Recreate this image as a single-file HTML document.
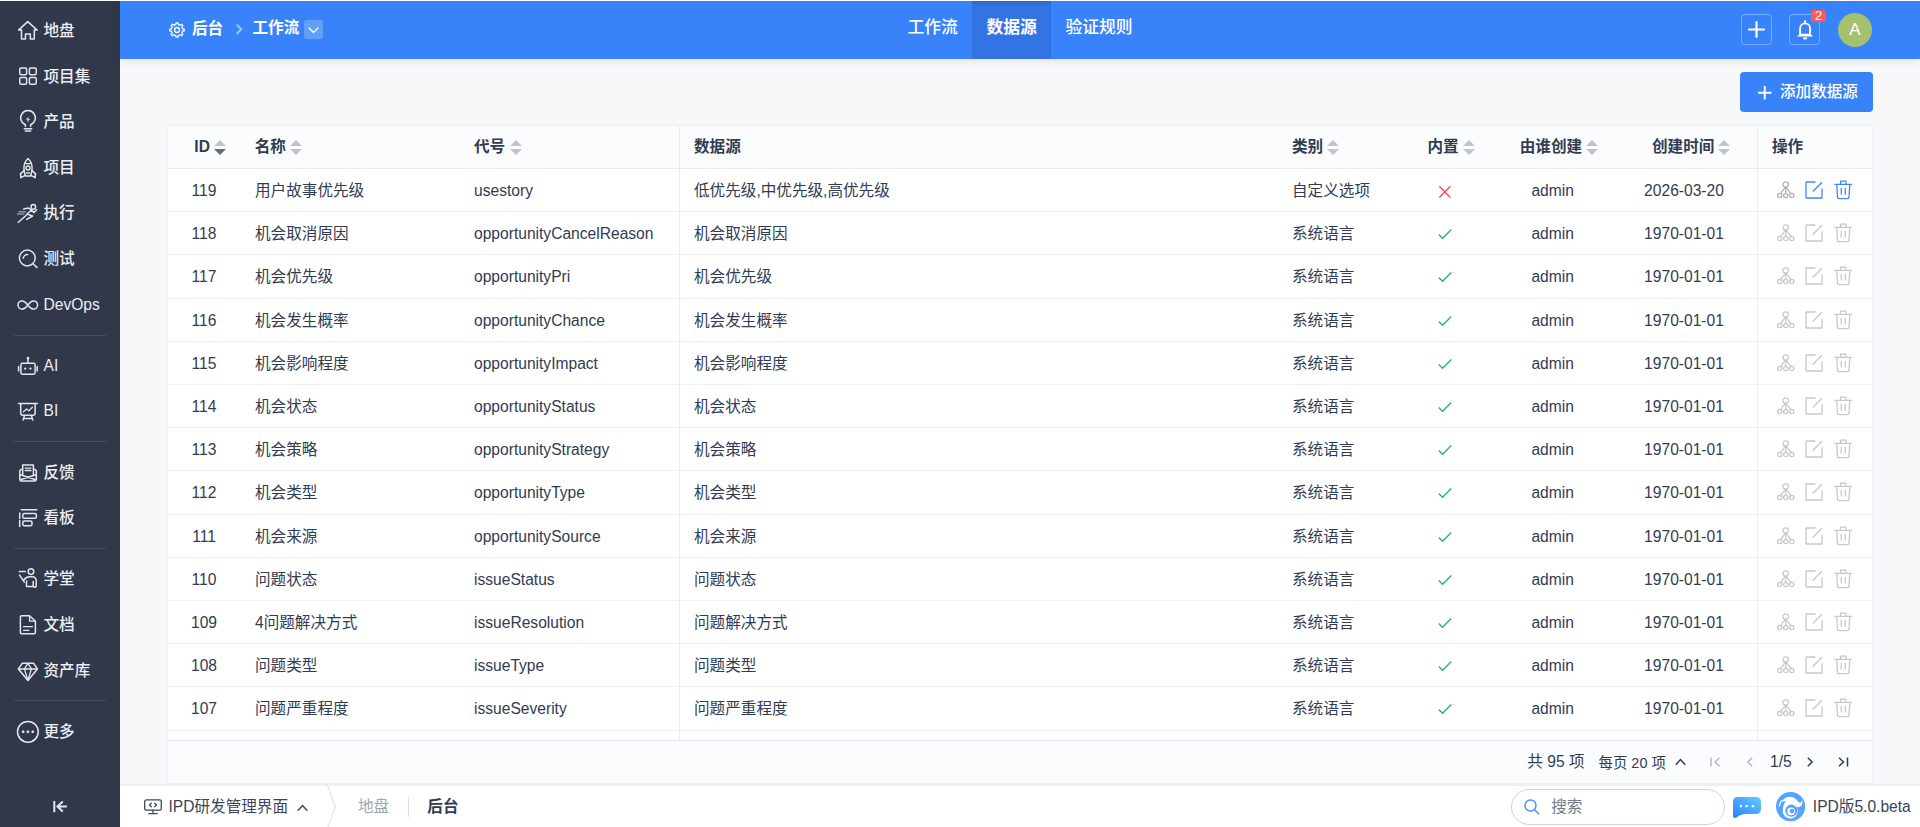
<!DOCTYPE html>
<html lang="zh-CN">
<head>
<meta charset="utf-8">
<title>数据源 - 工作流 - 后台</title>
<style>
*{box-sizing:border-box;margin:0;padding:0}
html,body{width:1920px;height:827px;overflow:hidden}
body{position:relative;background:#f7f8fa;color:#313c52;font-family:"Liberation Sans","Noto Sans CJK SC",sans-serif;font-size:15.6px;line-height:1}
.abs{position:absolute}
svg{display:block;overflow:visible}
/* top hairline */
#topline{left:0;top:0;width:1920px;height:1px;background:#fdfdfe;z-index:9}
/* sidebar */
#side{left:0;top:0;width:120px;height:827px;background:#30384a;color:#e9ecf2}
#side .it{position:absolute;left:0;width:120px;height:28px}
#side .it svg{position:absolute;left:14px;top:0;width:28px;height:28px;stroke:#e3e6ec;fill:none;stroke-width:1.5;stroke-linecap:round;stroke-linejoin:round}
#side .it span{font-weight:500;position:absolute;left:43.500px;top:0;line-height:29.500px;font-size:15.6px;white-space:nowrap;color:#eceef3}
#side .hr{position:absolute;left:14px;width:92px;height:1px;background:#454d5f}
/* header */
#head{left:120px;top:1px;width:1800px;height:57.5px;background:#3883fa;color:#fff;box-shadow:0 2px 9px rgba(40,60,100,.11)}
#head .t{position:absolute;white-space:nowrap;color:#fff;font-size:15.6px;line-height:20px}
#head .b{font-weight:700}
/* table */
#tbl{left:168px;top:126px;width:1704px;height:657px;background:#fff;border-radius:3px;box-shadow:0 0 0 1px #eef0f5,0 1px 3px rgba(60,70,100,.08);overflow:hidden}
#thead{left:0;top:0;width:1704px;height:42.6px;background:#fbfcfd;border-bottom:1px solid #e9ebf0}
#thead .h{position:absolute;top:0;line-height:42px;font-weight:700;white-space:nowrap;color:#313c52}
.so{position:absolute;top:14px;width:12px;height:15px}
.so:before,.so:after{content:"";position:absolute;left:0;border-left:6px solid transparent;border-right:6px solid transparent}
.so:before{top:0;border-bottom:6px solid #c0c4cd}
.so:after{top:9px;border-top:6px solid #c0c4cd}
.so.dn:after{border-top-color:#646b7d}
#tbody{left:0;top:43px;width:1704px;height:571px;overflow:hidden}
.r{position:absolute;left:0;width:1704px;height:43.2px;border-bottom:1px solid #eceef2}
.r span{position:absolute;top:0;line-height:43px;white-space:nowrap;color:#313c52}
.r .c0{left:0;width:72px;text-align:center}
.r .c1{left:87px}
.r .c2{left:306px}
.r .c3{left:526px}
.r .c4{left:1124px}
.r .c6{left:1334.700px;width:100px;text-align:center}
.r .c7{left:1466px;width:100px;text-align:center}
.vl{position:absolute;top:0;width:1px;height:614px;background:#ebedf2}
#tfoot{left:0;top:614px;width:1704px;height:43px;background:#fbfcfd;border-top:1px solid #dfe2e8}

.r svg{position:absolute;fill:none;stroke-linecap:round;stroke-linejoin:round}
.r .ck{left:1270px;top:15.500px;width:14px;height:12px;stroke:#27b574;stroke-width:1.400;stroke-linecap:butt;stroke-linejoin:miter}
.r .cx{left:1271.300px;top:16.600px;width:11.700px;height:11.700px;stroke:#fb4b55;stroke-width:1.500}
.r .i1{left:1608.700px;top:12.300px;width:17.500px;height:17.500px;stroke:#c8c8ca;stroke-width:1.300}
.r .i2{left:1637px;top:11.900px;width:18px;height:18px;stroke:#c8c8ca;stroke-width:1.300}
.r .i3{left:1665.800px;top:11px;width:18.500px;height:19.500px;stroke:#c8c8ca;stroke-width:1.300}
.r.a0 .i2,.r.a0 .i3{stroke:#3d86fb}
.r.a0 .i1{stroke:#b2b2b4}
.pg{fill:none;stroke-width:1.500;stroke-linecap:butt;stroke-linejoin:miter}
/* bottom bar */
#bar{left:120px;top:785px;width:1800px;height:42px;background:#fff;box-shadow:0 -1px 0 #f1f2f5}
#bar:before{content:"";position:absolute;left:0;top:0;width:100%;height:1px;background:#eceef2}
#barin{left:0;top:-.5px;width:1800px;height:42px}
</style>
</head>
<body>
<div id="side" class="abs">
<div class="it" style="top:16px"><svg viewBox="14 16 28 28"><path d="M27.700 21.600 18.600 30.100h2.900v9h4v-5h4.800v5h4v-9h2.900z"/></svg><span>地盘</span></div>
<div class="it" style="top:61.6px"><svg viewBox="14 61.6 28 28"><rect x="19.800" y="67.500" width="6.800" height="6.800" rx="1.300"/><rect x="29.400" y="67.500" width="6.800" height="6.800" rx="1.300"/><rect x="19.800" y="77.100" width="6.800" height="6.800" rx="1.300"/><rect x="29.400" y="77.100" width="6.800" height="6.800" rx="1.300"/></svg><span>项目集</span></div>
<div class="it" style="top:107.2px"><svg viewBox="14 107.2 28 28"><path d="M25.400 126.800v-1.900a7.300 7.300 0 1 1 5.200 0v1.900M24.300 128.900h7.400M25.300 131.300h5.400"/><path d="M29 116.600l-3.400 3.200h2.300l-1.100 2.800 3.500-3.400h-2.300z" fill="#e3e6ec" stroke="none"/></svg><span>产品</span></div>
<div class="it" style="top:152.8px"><svg viewBox="14 152.8 28 28"><path d="M28 158.300c-3.400 3-4.400 7.600-4 11.400.200 2.200.800 4.200 1.500 6h5c.700-1.800 1.300-3.800 1.500-6 .400-3.800-.600-8.400-4-11.400z"/><path d="M25 162.900c2 .900 4 .900 6 0"/><circle cx="28" cy="167.700" r="2"/><path d="M24 170.300l-3.500 3.400.400 3.800 4.300-2.300M32 170.300l3.500 3.400-.400 3.800-4.300-2.300M26.600 172.800h2.800"/></svg><span>项目</span></div>
<div class="it" style="top:198.4px"><svg viewBox="14 198.4 28 28"><circle cx="33.300" cy="207.300" r="2.300"/><path d="M23.700 209.400l4.700-1 3 2.100 2.600 2.500 2.700-2.800M31.200 210.600l-4.200 3.800 5.500 2-5.800 3.400M26.300 215.700l-8 7"/><path d="M19 212.100h6.500M17.500 214.400h6.500" stroke="#8c93a3"/></svg><span>执行</span></div>
<div class="it" style="top:244px"><svg viewBox="14 244 28 28"><circle cx="27.300" cy="258" r="7.900"/><path d="M32.900 263.700l4 3.700M23.300 258.300a4.300 4.300 0 0 1 4.400-3.900"/></svg><span>测试</span></div>
<div class="it" style="top:289.6px"><svg viewBox="14 289.6 28 28"><path d="M27.800 304.600c-1.700-2.300-3.400-4.100-5.700-4.100a4.100 4.100 0 0 0 0 8.200c2.300 0 4-1.800 5.700-4.100s3.400-4.100 5.700-4.100a4.100 4.100 0 0 1 0 8.200c-2.300 0-4-1.800-5.700-4.100z"/></svg><span>DevOps</span></div>
<div class="it" style="top:350.8px"><svg viewBox="14 350.8 28 28"><rect x="20.900" y="363" width="14.200" height="11" rx="1.600"/><path d="M28 358.300v4.400M18.600 366.200v4.600M37.200 366.200v4.600"/><circle cx="28" cy="357.900" r=".7" fill="#e3e6ec"/><circle cx="25.200" cy="368.400" r="1.150" fill="#e3e6ec" stroke="none"/><circle cx="30.400" cy="368.400" r="1.150" fill="#e3e6ec" stroke="none"/></svg><span>AI</span></div>
<div class="it" style="top:396.4px"><svg viewBox="14 396.4 28 28"><path d="M18.600 403.800h18.800M20.700 404v9.700a2 2 0 0 0 2 2h10.400a2 2 0 0 0 2-2V404M24.400 416l-1.300 4.500M31.500 416l1.300 4.500M23.700 419h8.500"/><path d="M23.400 412.200l3.300-2.900 2.100 2 3.600-3.700" stroke-width="1.300"/></svg><span>BI</span></div>
<div class="it" style="top:457.6px"><svg viewBox="14 457.6 28 28"><path d="M22.300 469.200h-1a1.500 1.500 0 0 0-1.500 1.500v8.300a1.500 1.500 0 0 0 1.500 1.500h13.500a1.500 1.500 0 0 0 1.500-1.500v-8.300a1.500 1.500 0 0 0-1.500-1.500h-1M22.700 474.500v-9.800h10.700v9.800M20.300 474.300l14.600 4.800M35.800 474.300l-14.600 4.800"/><path d="M25.200 467.800h5.800M25.200 470.100h5.800" stroke-width="1.300"/></svg><span>反馈</span></div>
<div class="it" style="top:503.2px"><svg viewBox="14 503.2 28 28"><path d="M21.400 510h15.500M19.700 513.300v5.500M19.700 520.600v6"/><rect x="22.800" y="513.700" width="13.600" height="4.700" rx="1.500"/><rect x="22.800" y="521.300" width="9.200" height="4.700" rx="1.500"/></svg><span>看板</span></div>
<div class="it" style="top:564.4px"><svg viewBox="14 564.4 28 28"><circle cx="31" cy="572" r="2.800"/><path d="M19.300 572h6M19.600 575.500l4.700 7M23.300 581c1.600-2.200 3.300-3.900 6-3.900h3a3.900 3.900 0 0 1 3.900 3.900v5.200a1.500 1.500 0 0 1-3 0v-4.400M26.500 581.300v5.700h6.500"/></svg><span>学堂</span></div>
<div class="it" style="top:610px"><svg viewBox="14 610 28 28"><path d="M29.600 615.700h-8a1.200 1.200 0 0 0-1.200 1.200v15.700a1.200 1.200 0 0 0 1.200 1.200h12.600a1.200 1.200 0 0 0 1.200-1.200v-11.300z"/><path d="M29.600 616v5.200h5.600M23.500 626.700h9M23.500 630.300h5.300" stroke-width="1.300"/></svg><span>文档</span></div>
<div class="it" style="top:655.6px"><svg viewBox="14 655.6 28 28"><path d="M22.200 662.900h11.500l3.700 5.600-9.500 11.600-9.500-11.600zM18.600 668.500h18.600" /><path d="M24.400 668.500l3.500-5.500 3.500 5.500-3.500 11.400z" stroke-width="1.300"/></svg><span>资产库</span></div>
<div class="it" style="top:716.8px"><svg viewBox="14 716.8 28 28"><circle cx="27.900" cy="731.600" r="10.400"/><circle cx="23.100" cy="731.600" r="1.350" fill="#e3e6ec" stroke="none"/><circle cx="27.900" cy="731.600" r="1.350" fill="#e3e6ec" stroke="none"/><circle cx="32.700" cy="731.600" r="1.350" fill="#e3e6ec" stroke="none"/></svg><span>更多</span></div>
<i class="hr" style="top:334.5px"></i><i class="hr" style="top:440.7px"></i><i class="hr" style="top:547.5px"></i><i class="hr" style="top:699.7px"></i>
<svg class="abs" style="left:50px;top:798px;width:20px;height:17px;fill:none;stroke:#e3e6ec;stroke-width:2;stroke-linecap:butt;stroke-linejoin:miter" viewBox="50 798 20 17"><path d="M54.300 801v11.200M62.800 801.500l-5.400 5 5.400 5M57.600 806.500h9.300"/></svg>
</div>
<div id="head" class="abs">
 <svg class="abs" style="left:49px;top:20.600px;width:16px;height:16px" viewBox="0 0 24 24" fill="none" stroke="#fff" stroke-width="2" stroke-linejoin="round"><circle cx="12" cy="12" r="3.700"/><path d="M10.09 3.72L10.58 1.19L13.42 1.19L13.91 3.72A8.5 8.5 0 0 1 16.5 4.79L18.64 3.35L20.65 5.36L19.21 7.5A8.5 8.5 0 0 1 20.28 10.09L22.81 10.58L22.81 13.42L20.28 13.91A8.5 8.5 0 0 1 19.21 16.5L20.65 18.64L18.64 20.65L16.5 19.21A8.5 8.5 0 0 1 13.91 20.28L13.42 22.81L10.58 22.81L10.09 20.28A8.5 8.5 0 0 1 7.5 19.21L5.36 20.65L3.35 18.64L4.79 16.5A8.5 8.5 0 0 1 3.72 13.91L1.19 13.42L1.19 10.58L3.72 10.09A8.5 8.5 0 0 1 4.79 7.5L3.35 5.36L5.36 3.35L7.5 4.79A8.5 8.5 0 0 1 10.09 3.72Z"/></svg>
 <div class="t b" style="left:72px;top:17.600px">后台</div>
 <svg class="abs" style="left:115.5px;top:23px;width:7px;height:10.5px" viewBox="0 0 8 12" fill="none" stroke="rgba(255,255,255,.5)" stroke-width="2.500" stroke-linecap="round" stroke-linejoin="round"><path d="M1.5 1.5 6 6 1.5 10.500"/></svg>
 <div class="t b" style="left:132.5px;top:17px">工作流</div>
 <div class="abs" style="left:184px;top:19px;width:19px;height:19px;border-radius:3px;background:rgba(255,255,255,.22)"><svg class="abs" style="left:4px;top:6.500px;width:11px;height:7px" viewBox="0 0 11 7" fill="none" stroke="#fff" stroke-width="1.4" stroke-linecap="round" stroke-linejoin="round"><path d="M1 1l4.500 4.500L10 1"/></svg></div>
 <div class="abs" style="left:852px;top:0;width:79px;height:57.500px;background:rgba(20,40,110,.16);box-shadow:inset 0 3px 4px -2px rgba(0,0,40,.16)"></div>
 <div class="t" style="left:787.500px;top:17.200px;font-size:16.800px;font-weight:500">工作流</div>
 <div class="t b" style="left:866.500px;top:17.200px;font-size:16.800px">数据源</div>
 <div class="t" style="left:945.500px;top:17.200px;font-size:16.800px;font-weight:500">验证规则</div>
 <div class="abs" style="left:1621px;top:13px;width:31px;height:31px;border:1px solid rgba(255,255,255,.32);border-radius:4px"><svg class="abs" style="left:5.900px;top:6.100px;width:17px;height:17px" viewBox="0 0 17 17" stroke="#fff" stroke-width="2.200" stroke-linecap="round"><path d="M8.500 1v15M1 8.500h15"/></svg></div>
 <div class="abs" style="left:1669px;top:13px;width:31px;height:31px;border:1px solid rgba(255,255,255,.32);border-radius:4px"><svg class="abs" style="left:7px;top:5px;width:16px;height:20px" viewBox="0 0 16 20" fill="none" stroke="#fff" stroke-width="1.900" stroke-linejoin="round" stroke-linecap="round"><path d="M8.100 .9v2M3.100 14.400V8.400a5 5 0 0 1 10 0v6"/><path d="M3.200 13.700-.1 16.600h16.300l-3.200-2.900zM5.900 17.400h4.400a2.200 2.200 0 0 1-4.400 0z" fill="#fff" stroke="none"/></svg></div>
 <div class="abs" style="left:1691px;top:8.800px;width:15px;height:12.200px;border-radius:2.500px;background:#fc5959;color:#fff;font-size:13.500px;line-height:12.600px;text-align:center">2</div>
 <div class="abs" style="left:1718px;top:11.500px;width:34px;height:34px;border-radius:50%;background:#a3c16e;color:#fff;font-size:17px;line-height:33px;text-align:center">A</div>
</div>
<div id="topline" class="abs"></div>
<div id="addbtn" class="abs" style="left:1739.800px;top:71.800px;width:133.400px;height:40.400px;border-radius:4px;background:#3883fa;color:#fff">
 <svg class="abs" style="left:17.900px;top:14px;width:13.500px;height:13.500px" viewBox="0 0 13.500 13.500" stroke="#fff" stroke-width="1.900"><path d="M6.750 0v13.500M0 6.750h13.500"/></svg>
 <div class="abs" style="left:40.200px;top:10.500px;line-height:20px;white-space:nowrap;font-weight:500">添加数据源</div>
</div>
<div id="tbl" class="abs">
 <div id="thead" class="abs"><div class="h" style="left:26.30000000000001px">ID</div><i class="so dn" style="left:46px"></i><div class="h" style="left:86.69999999999999px">名称</div><i class="so" style="left:122px"></i><div class="h" style="left:306px">代号</div><i class="so" style="left:342px"></i><div class="h" style="left:526px">数据源</div><div class="h" style="left:1124px">类别</div><i class="so" style="left:1159px"></i><div class="h" style="left:1259.5px">内置</div><i class="so" style="left:1295px"></i><div class="h" style="left:1351.7px">由谁创建</div><i class="so" style="left:1418px"></i><div class="h" style="left:1484px">创建时间</div><i class="so" style="left:1550px"></i><div class="h" style="left:1604px">操作</div></div>
 <div id="tbody" class="abs">
<div class="r a0" style="top:0px;height:43px"><span class="c0">119</span><span class="c1">用户故事优先级</span><span class="c2">usestory</span><span class="c3">低优先级,中优先级,高优先级</span><span class="c4">自定义选项</span><svg class="cx" viewBox="0 0 12 12"><path d="M.8.8l10.400 10.400M11.200.8.800 11.200"/></svg><span class="c6">admin</span><span class="c7">2026-03-20</span><svg class="i1" viewBox="0 0 18 18"><circle cx="9" cy="3.600" r="2.800"/><circle cx="2.800" cy="15" r="2.200"/><circle cx="9" cy="15" r="2.200"/><circle cx="15.200" cy="15" r="2.200"/><path d="M9 6.400v6.400M8.300 6.800 3.700 13M9.700 6.800 14.300 13"/></svg><svg class="i2" viewBox="0 0 18 18"><path d="M10.500 1H1.300a.3.300 0 0 0-.3.300v15.400a.3.300 0 0 0 .3.300h15.400a.3.300 0 0 0 .3-.3V7.500" stroke-linecap="butt"/><path d="M17 1.200 7.700 10.500" stroke-linecap="butt"/></svg><svg class="i3" viewBox="0 0 19 20"><path d="M.8 4.500h17.400M6.800 4.300V1.200h5.400v3.100M2.800 4.800l.8 12.800a1.500 1.500 0 0 0 1.500 1.400h8.800a1.500 1.500 0 0 0 1.500-1.400l.8-12.800M7.500 8.500v6M11.500 8.500v6"/></svg></div>
<div class="r a1" style="top:43px;height:43px"><span class="c0">118</span><span class="c1">机会取消原因</span><span class="c2">opportunityCancelReason</span><span class="c3">机会取消原因</span><span class="c4">系统语言</span><svg class="ck" viewBox="0 0 14 12"><path d="M.7 6.500 4.600 10.200 13.300 1.500"/></svg><span class="c6">admin</span><span class="c7">1970-01-01</span><svg class="i1" viewBox="0 0 18 18"><circle cx="9" cy="3.600" r="2.800"/><circle cx="2.800" cy="15" r="2.200"/><circle cx="9" cy="15" r="2.200"/><circle cx="15.200" cy="15" r="2.200"/><path d="M9 6.400v6.400M8.300 6.800 3.700 13M9.700 6.800 14.300 13"/></svg><svg class="i2" viewBox="0 0 18 18"><path d="M10.500 1H1.300a.3.300 0 0 0-.3.300v15.400a.3.300 0 0 0 .3.300h15.400a.3.300 0 0 0 .3-.3V7.500" stroke-linecap="butt"/><path d="M17 1.200 7.700 10.500" stroke-linecap="butt"/></svg><svg class="i3" viewBox="0 0 19 20"><path d="M.8 4.500h17.400M6.800 4.300V1.200h5.400v3.100M2.800 4.800l.8 12.800a1.500 1.500 0 0 0 1.500 1.400h8.800a1.500 1.500 0 0 0 1.500-1.400l.8-12.800M7.500 8.500v6M11.500 8.500v6"/></svg></div>
<div class="r a1" style="top:86px;height:44px"><span class="c0">117</span><span class="c1">机会优先级</span><span class="c2">opportunityPri</span><span class="c3">机会优先级</span><span class="c4">系统语言</span><svg class="ck" viewBox="0 0 14 12"><path d="M.7 6.500 4.600 10.200 13.300 1.500"/></svg><span class="c6">admin</span><span class="c7">1970-01-01</span><svg class="i1" viewBox="0 0 18 18"><circle cx="9" cy="3.600" r="2.800"/><circle cx="2.800" cy="15" r="2.200"/><circle cx="9" cy="15" r="2.200"/><circle cx="15.200" cy="15" r="2.200"/><path d="M9 6.400v6.400M8.300 6.800 3.700 13M9.700 6.800 14.300 13"/></svg><svg class="i2" viewBox="0 0 18 18"><path d="M10.500 1H1.300a.3.300 0 0 0-.3.300v15.400a.3.300 0 0 0 .3.300h15.400a.3.300 0 0 0 .3-.3V7.500" stroke-linecap="butt"/><path d="M17 1.200 7.700 10.500" stroke-linecap="butt"/></svg><svg class="i3" viewBox="0 0 19 20"><path d="M.8 4.500h17.400M6.800 4.300V1.200h5.400v3.100M2.800 4.800l.8 12.800a1.500 1.500 0 0 0 1.500 1.400h8.800a1.500 1.500 0 0 0 1.500-1.400l.8-12.800M7.500 8.500v6M11.500 8.500v6"/></svg></div>
<div class="r a1" style="top:130px;height:43px"><span class="c0">116</span><span class="c1">机会发生概率</span><span class="c2">opportunityChance</span><span class="c3">机会发生概率</span><span class="c4">系统语言</span><svg class="ck" viewBox="0 0 14 12"><path d="M.7 6.500 4.600 10.200 13.300 1.500"/></svg><span class="c6">admin</span><span class="c7">1970-01-01</span><svg class="i1" viewBox="0 0 18 18"><circle cx="9" cy="3.600" r="2.800"/><circle cx="2.800" cy="15" r="2.200"/><circle cx="9" cy="15" r="2.200"/><circle cx="15.200" cy="15" r="2.200"/><path d="M9 6.400v6.400M8.300 6.800 3.700 13M9.700 6.800 14.300 13"/></svg><svg class="i2" viewBox="0 0 18 18"><path d="M10.500 1H1.300a.3.300 0 0 0-.3.300v15.400a.3.300 0 0 0 .3.300h15.400a.3.300 0 0 0 .3-.3V7.500" stroke-linecap="butt"/><path d="M17 1.200 7.700 10.500" stroke-linecap="butt"/></svg><svg class="i3" viewBox="0 0 19 20"><path d="M.8 4.500h17.400M6.800 4.300V1.200h5.400v3.100M2.800 4.800l.8 12.800a1.500 1.500 0 0 0 1.500 1.400h8.800a1.500 1.500 0 0 0 1.500-1.400l.8-12.800M7.500 8.500v6M11.500 8.500v6"/></svg></div>
<div class="r a1" style="top:173px;height:43px"><span class="c0">115</span><span class="c1">机会影响程度</span><span class="c2">opportunityImpact</span><span class="c3">机会影响程度</span><span class="c4">系统语言</span><svg class="ck" viewBox="0 0 14 12"><path d="M.7 6.500 4.600 10.200 13.300 1.500"/></svg><span class="c6">admin</span><span class="c7">1970-01-01</span><svg class="i1" viewBox="0 0 18 18"><circle cx="9" cy="3.600" r="2.800"/><circle cx="2.800" cy="15" r="2.200"/><circle cx="9" cy="15" r="2.200"/><circle cx="15.200" cy="15" r="2.200"/><path d="M9 6.400v6.400M8.300 6.800 3.700 13M9.700 6.800 14.300 13"/></svg><svg class="i2" viewBox="0 0 18 18"><path d="M10.500 1H1.300a.3.300 0 0 0-.3.300v15.400a.3.300 0 0 0 .3.300h15.400a.3.300 0 0 0 .3-.3V7.500" stroke-linecap="butt"/><path d="M17 1.200 7.700 10.500" stroke-linecap="butt"/></svg><svg class="i3" viewBox="0 0 19 20"><path d="M.8 4.500h17.400M6.800 4.300V1.200h5.400v3.100M2.800 4.800l.8 12.800a1.500 1.500 0 0 0 1.500 1.400h8.800a1.500 1.500 0 0 0 1.500-1.400l.8-12.800M7.500 8.500v6M11.500 8.500v6"/></svg></div>
<div class="r a1" style="top:216px;height:43px"><span class="c0">114</span><span class="c1">机会状态</span><span class="c2">opportunityStatus</span><span class="c3">机会状态</span><span class="c4">系统语言</span><svg class="ck" viewBox="0 0 14 12"><path d="M.7 6.500 4.600 10.200 13.300 1.500"/></svg><span class="c6">admin</span><span class="c7">1970-01-01</span><svg class="i1" viewBox="0 0 18 18"><circle cx="9" cy="3.600" r="2.800"/><circle cx="2.800" cy="15" r="2.200"/><circle cx="9" cy="15" r="2.200"/><circle cx="15.200" cy="15" r="2.200"/><path d="M9 6.400v6.400M8.300 6.800 3.700 13M9.700 6.800 14.300 13"/></svg><svg class="i2" viewBox="0 0 18 18"><path d="M10.500 1H1.300a.3.300 0 0 0-.3.300v15.400a.3.300 0 0 0 .3.300h15.400a.3.300 0 0 0 .3-.3V7.500" stroke-linecap="butt"/><path d="M17 1.200 7.700 10.500" stroke-linecap="butt"/></svg><svg class="i3" viewBox="0 0 19 20"><path d="M.8 4.500h17.400M6.800 4.300V1.200h5.400v3.100M2.800 4.800l.8 12.800a1.500 1.500 0 0 0 1.500 1.400h8.800a1.500 1.500 0 0 0 1.500-1.400l.8-12.800M7.500 8.500v6M11.500 8.500v6"/></svg></div>
<div class="r a1" style="top:259px;height:43px"><span class="c0">113</span><span class="c1">机会策略</span><span class="c2">opportunityStrategy</span><span class="c3">机会策略</span><span class="c4">系统语言</span><svg class="ck" viewBox="0 0 14 12"><path d="M.7 6.500 4.600 10.200 13.300 1.500"/></svg><span class="c6">admin</span><span class="c7">1970-01-01</span><svg class="i1" viewBox="0 0 18 18"><circle cx="9" cy="3.600" r="2.800"/><circle cx="2.800" cy="15" r="2.200"/><circle cx="9" cy="15" r="2.200"/><circle cx="15.200" cy="15" r="2.200"/><path d="M9 6.400v6.400M8.300 6.800 3.700 13M9.700 6.800 14.300 13"/></svg><svg class="i2" viewBox="0 0 18 18"><path d="M10.500 1H1.300a.3.300 0 0 0-.3.300v15.400a.3.300 0 0 0 .3.300h15.400a.3.300 0 0 0 .3-.3V7.500" stroke-linecap="butt"/><path d="M17 1.200 7.700 10.500" stroke-linecap="butt"/></svg><svg class="i3" viewBox="0 0 19 20"><path d="M.8 4.500h17.400M6.800 4.300V1.200h5.400v3.100M2.800 4.800l.8 12.800a1.500 1.500 0 0 0 1.500 1.400h8.800a1.500 1.500 0 0 0 1.500-1.400l.8-12.800M7.500 8.500v6M11.500 8.500v6"/></svg></div>
<div class="r a1" style="top:302px;height:44px"><span class="c0">112</span><span class="c1">机会类型</span><span class="c2">opportunityType</span><span class="c3">机会类型</span><span class="c4">系统语言</span><svg class="ck" viewBox="0 0 14 12"><path d="M.7 6.500 4.600 10.200 13.300 1.500"/></svg><span class="c6">admin</span><span class="c7">1970-01-01</span><svg class="i1" viewBox="0 0 18 18"><circle cx="9" cy="3.600" r="2.800"/><circle cx="2.800" cy="15" r="2.200"/><circle cx="9" cy="15" r="2.200"/><circle cx="15.200" cy="15" r="2.200"/><path d="M9 6.400v6.400M8.300 6.800 3.700 13M9.700 6.800 14.300 13"/></svg><svg class="i2" viewBox="0 0 18 18"><path d="M10.500 1H1.300a.3.300 0 0 0-.3.300v15.400a.3.300 0 0 0 .3.300h15.400a.3.300 0 0 0 .3-.3V7.500" stroke-linecap="butt"/><path d="M17 1.200 7.700 10.500" stroke-linecap="butt"/></svg><svg class="i3" viewBox="0 0 19 20"><path d="M.8 4.500h17.400M6.800 4.300V1.200h5.400v3.100M2.800 4.800l.8 12.800a1.500 1.500 0 0 0 1.500 1.400h8.800a1.500 1.500 0 0 0 1.500-1.400l.8-12.800M7.500 8.500v6M11.500 8.500v6"/></svg></div>
<div class="r a1" style="top:346px;height:43px"><span class="c0">111</span><span class="c1">机会来源</span><span class="c2">opportunitySource</span><span class="c3">机会来源</span><span class="c4">系统语言</span><svg class="ck" viewBox="0 0 14 12"><path d="M.7 6.500 4.600 10.200 13.300 1.500"/></svg><span class="c6">admin</span><span class="c7">1970-01-01</span><svg class="i1" viewBox="0 0 18 18"><circle cx="9" cy="3.600" r="2.800"/><circle cx="2.800" cy="15" r="2.200"/><circle cx="9" cy="15" r="2.200"/><circle cx="15.200" cy="15" r="2.200"/><path d="M9 6.400v6.400M8.300 6.800 3.700 13M9.700 6.800 14.300 13"/></svg><svg class="i2" viewBox="0 0 18 18"><path d="M10.500 1H1.300a.3.300 0 0 0-.3.300v15.400a.3.300 0 0 0 .3.300h15.400a.3.300 0 0 0 .3-.3V7.500" stroke-linecap="butt"/><path d="M17 1.200 7.700 10.500" stroke-linecap="butt"/></svg><svg class="i3" viewBox="0 0 19 20"><path d="M.8 4.500h17.400M6.800 4.300V1.200h5.400v3.100M2.800 4.800l.8 12.800a1.500 1.500 0 0 0 1.500 1.400h8.800a1.500 1.500 0 0 0 1.500-1.400l.8-12.800M7.500 8.500v6M11.500 8.500v6"/></svg></div>
<div class="r a1" style="top:389px;height:43px"><span class="c0">110</span><span class="c1">问题状态</span><span class="c2">issueStatus</span><span class="c3">问题状态</span><span class="c4">系统语言</span><svg class="ck" viewBox="0 0 14 12"><path d="M.7 6.500 4.600 10.200 13.300 1.500"/></svg><span class="c6">admin</span><span class="c7">1970-01-01</span><svg class="i1" viewBox="0 0 18 18"><circle cx="9" cy="3.600" r="2.800"/><circle cx="2.800" cy="15" r="2.200"/><circle cx="9" cy="15" r="2.200"/><circle cx="15.200" cy="15" r="2.200"/><path d="M9 6.400v6.400M8.300 6.800 3.700 13M9.700 6.800 14.300 13"/></svg><svg class="i2" viewBox="0 0 18 18"><path d="M10.500 1H1.300a.3.300 0 0 0-.3.300v15.400a.3.300 0 0 0 .3.300h15.400a.3.300 0 0 0 .3-.3V7.500" stroke-linecap="butt"/><path d="M17 1.200 7.700 10.500" stroke-linecap="butt"/></svg><svg class="i3" viewBox="0 0 19 20"><path d="M.8 4.500h17.400M6.800 4.300V1.200h5.400v3.100M2.800 4.800l.8 12.800a1.500 1.500 0 0 0 1.500 1.400h8.800a1.500 1.500 0 0 0 1.500-1.400l.8-12.800M7.500 8.500v6M11.500 8.500v6"/></svg></div>
<div class="r a1" style="top:432px;height:43px"><span class="c0">109</span><span class="c1">4问题解决方式</span><span class="c2">issueResolution</span><span class="c3">问题解决方式</span><span class="c4">系统语言</span><svg class="ck" viewBox="0 0 14 12"><path d="M.7 6.500 4.600 10.200 13.300 1.500"/></svg><span class="c6">admin</span><span class="c7">1970-01-01</span><svg class="i1" viewBox="0 0 18 18"><circle cx="9" cy="3.600" r="2.800"/><circle cx="2.800" cy="15" r="2.200"/><circle cx="9" cy="15" r="2.200"/><circle cx="15.200" cy="15" r="2.200"/><path d="M9 6.400v6.400M8.300 6.800 3.700 13M9.700 6.800 14.300 13"/></svg><svg class="i2" viewBox="0 0 18 18"><path d="M10.500 1H1.300a.3.300 0 0 0-.3.300v15.400a.3.300 0 0 0 .3.300h15.400a.3.300 0 0 0 .3-.3V7.500" stroke-linecap="butt"/><path d="M17 1.200 7.700 10.500" stroke-linecap="butt"/></svg><svg class="i3" viewBox="0 0 19 20"><path d="M.8 4.500h17.400M6.800 4.300V1.200h5.400v3.100M2.800 4.800l.8 12.800a1.500 1.500 0 0 0 1.500 1.400h8.800a1.500 1.500 0 0 0 1.500-1.400l.8-12.800M7.500 8.500v6M11.500 8.500v6"/></svg></div>
<div class="r a1" style="top:475px;height:43px"><span class="c0">108</span><span class="c1">问题类型</span><span class="c2">issueType</span><span class="c3">问题类型</span><span class="c4">系统语言</span><svg class="ck" viewBox="0 0 14 12"><path d="M.7 6.500 4.600 10.200 13.300 1.500"/></svg><span class="c6">admin</span><span class="c7">1970-01-01</span><svg class="i1" viewBox="0 0 18 18"><circle cx="9" cy="3.600" r="2.800"/><circle cx="2.800" cy="15" r="2.200"/><circle cx="9" cy="15" r="2.200"/><circle cx="15.200" cy="15" r="2.200"/><path d="M9 6.400v6.400M8.300 6.800 3.700 13M9.700 6.800 14.300 13"/></svg><svg class="i2" viewBox="0 0 18 18"><path d="M10.500 1H1.300a.3.300 0 0 0-.3.300v15.400a.3.300 0 0 0 .3.300h15.400a.3.300 0 0 0 .3-.3V7.500" stroke-linecap="butt"/><path d="M17 1.200 7.700 10.500" stroke-linecap="butt"/></svg><svg class="i3" viewBox="0 0 19 20"><path d="M.8 4.500h17.400M6.800 4.300V1.200h5.400v3.100M2.800 4.800l.8 12.800a1.500 1.500 0 0 0 1.500 1.400h8.800a1.500 1.500 0 0 0 1.500-1.400l.8-12.800M7.500 8.500v6M11.500 8.500v6"/></svg></div>
<div class="r a1" style="top:518px;height:44px"><span class="c0">107</span><span class="c1">问题严重程度</span><span class="c2">issueSeverity</span><span class="c3">问题严重程度</span><span class="c4">系统语言</span><svg class="ck" viewBox="0 0 14 12"><path d="M.7 6.500 4.600 10.200 13.300 1.500"/></svg><span class="c6">admin</span><span class="c7">1970-01-01</span><svg class="i1" viewBox="0 0 18 18"><circle cx="9" cy="3.600" r="2.800"/><circle cx="2.800" cy="15" r="2.200"/><circle cx="9" cy="15" r="2.200"/><circle cx="15.200" cy="15" r="2.200"/><path d="M9 6.400v6.400M8.300 6.800 3.700 13M9.700 6.800 14.300 13"/></svg><svg class="i2" viewBox="0 0 18 18"><path d="M10.500 1H1.300a.3.300 0 0 0-.3.300v15.400a.3.300 0 0 0 .3.300h15.400a.3.300 0 0 0 .3-.3V7.500" stroke-linecap="butt"/><path d="M17 1.200 7.700 10.500" stroke-linecap="butt"/></svg><svg class="i3" viewBox="0 0 19 20"><path d="M.8 4.500h17.400M6.800 4.300V1.200h5.400v3.100M2.800 4.800l.8 12.800a1.500 1.500 0 0 0 1.500 1.400h8.800a1.500 1.500 0 0 0 1.500-1.400l.8-12.800M7.500 8.500v6M11.500 8.500v6"/></svg></div>
<div class="r a1" style="top:562px;height:43px"><span class="c0">106</span><span class="c1">问题优先级</span><span class="c2">issuePri</span><span class="c3">问题优先级</span><span class="c4">系统语言</span><svg class="ck" viewBox="0 0 14 12"><path d="M.7 6.500 4.600 10.200 13.300 1.500"/></svg><span class="c6">admin</span><span class="c7">1970-01-01</span><svg class="i1" viewBox="0 0 18 18"><circle cx="9" cy="3.600" r="2.800"/><circle cx="2.800" cy="15" r="2.200"/><circle cx="9" cy="15" r="2.200"/><circle cx="15.200" cy="15" r="2.200"/><path d="M9 6.400v6.400M8.300 6.800 3.700 13M9.700 6.800 14.300 13"/></svg><svg class="i2" viewBox="0 0 18 18"><path d="M10.500 1H1.300a.3.300 0 0 0-.3.300v15.400a.3.300 0 0 0 .3.300h15.400a.3.300 0 0 0 .3-.3V7.500" stroke-linecap="butt"/><path d="M17 1.200 7.700 10.500" stroke-linecap="butt"/></svg><svg class="i3" viewBox="0 0 19 20"><path d="M.8 4.500h17.400M6.800 4.300V1.200h5.400v3.100M2.800 4.800l.8 12.800a1.500 1.500 0 0 0 1.500 1.400h8.800a1.500 1.500 0 0 0 1.500-1.400l.8-12.800M7.500 8.500v6M11.500 8.500v6"/></svg></div>
</div>
 <i class="vl" style="left:511px"></i><i class="vl" style="left:1589px"></i>
 <div id="tfoot" class="abs">
 <div class="abs" style="left:1359.300px;top:11px;line-height:20px;white-space:nowrap">共 95 项</div>
 <div class="abs" style="left:1430.600px;top:11.500px;line-height:20px;font-size:14.400px;white-space:nowrap">每页 20 项</div>
 <svg class="abs pg" style="left:1507px;top:17.300px;width:11px;height:7.500px" viewBox="0 0 11 7.500" stroke="#313c52"><path d="M.8 6.700 5.500 1.500l4.700 5.200"/></svg>
 <svg class="abs pg" style="left:1542.200px;top:15.900px;width:10.500px;height:10px" viewBox="0 0 10.500 10" stroke="#b4b8c2"><path d="M1 .5v9M9.500.7 5 5l4.500 4.300"/></svg>
 <svg class="abs pg" style="left:1578.800px;top:15.900px;width:6px;height:10px" viewBox="0 0 6 10" stroke="#b4b8c2"><path d="M5.200.7.900 5l4.300 4.300"/></svg>
 <div class="abs" style="left:1602px;top:10.500px;line-height:20px;font-size:15.600px;white-space:nowrap">1/5</div>
 <svg class="abs pg" style="left:1638.600px;top:15.900px;width:6px;height:10px" viewBox="0 0 6 10" stroke="#313c52"><path d="M.8.700 5.100 5 .8 9.300"/></svg>
 <svg class="abs pg" style="left:1670.300px;top:15.900px;width:10.500px;height:10px" viewBox="0 0 10.500 10" stroke="#313c52"><path d="M9.500.5v9M1 .7 5.500 5 1 9.300"/></svg>
</div>
</div>
<div id="bar" class="abs"><div id="barin" class="abs">
 <svg class="abs" style="left:23.500px;top:14.200px;width:18px;height:16px;fill:none;stroke:#3d475c;stroke-width:1.300;stroke-linejoin:round;stroke-linecap:round" viewBox="0 0 18 16"><rect x=".7" y=".9" width="16.600" height="10.300" rx="1.600"/><path d="M9 11.400v3M4.800 14.700h8.400M7.300 4.200 5.500 6l1.800 1.800M10.700 4.200 12.500 6l-1.800 1.800"/></svg>
 <div class="abs" style="left:48.500px;top:12px;line-height:20px;white-space:nowrap;color:#3a4459">IPD研发管理界面</div>
 <svg class="abs" style="left:177px;top:19.200px;width:11px;height:7.500px;fill:none;stroke:#3a4459;stroke-width:1.400" viewBox="0 0 11 7.500"><path d="M.7 6.800 5.500 1.600l4.800 5.200"/></svg>
 <svg class="abs" style="left:205px;top:0;width:12px;height:43px;fill:none;stroke:#e3e5eb;stroke-width:1.200" viewBox="0 0 12 43"><path d="M2.300-.500 10.400 22 2.300 43.500"/></svg>
 <div class="abs" style="left:238px;top:12px;line-height:20px;white-space:nowrap;color:#9ea3af">地盘</div>
 <i class="abs" style="left:288px;top:12.700px;width:1px;height:19.500px;background:#dcdfe6"></i>
 <div class="abs" style="left:307.300px;top:12px;line-height:20px;white-space:nowrap;font-weight:700">后台</div>
 <div class="abs" style="left:1391px;top:4.200px;width:214px;height:36px;border:1px solid #ccd2ea;border-radius:18px;background:#fff"></div>
 <svg class="abs" style="left:1404px;top:14.300px;width:15.500px;height:15.500px;fill:none;stroke:#4b8dfb;stroke-width:1.500;stroke-linecap:round" viewBox="0 0 16 16"><circle cx="6.700" cy="6.700" r="5.700"/><path d="M11 11l4.200 4.200"/></svg>
 <div class="abs" style="left:1431.200px;top:12px;line-height:20px;white-space:nowrap;color:#737a8c">搜索</div>
 <svg class="abs" style="left:1613px;top:12px;width:28px;height:21px" viewBox="0 0 28 21"><defs><linearGradient id="cg" x1="0" y1="1" x2="1" y2="0"><stop offset="0" stop-color="#2a80ff"/><stop offset="1" stop-color="#66ccff"/></linearGradient></defs><path d="M4.500 0h19a4.500 4.500 0 0 1 4.500 4.500v8a4.500 4.500 0 0 1-4.500 4.500H13c-4.500 0-7 1.700-9.500 3.500C2 21.500 0 20.800 0 19V4.500A4.500 4.500 0 0 1 4.500 0z" fill="url(#cg)"/><rect x="6.800" y="7.900" width="2.300" height="2.300" rx=".4" fill="#fff"/><rect x="12.400" y="7.900" width="2.300" height="2.300" rx=".4" fill="#fff"/><rect x="18.800" y="7.900" width="2.300" height="2.300" rx=".4" fill="#fff"/></svg>
 <svg class="abs" style="left:1656.400px;top:7.800px;width:29.200px;height:29.200px" viewBox="0 0 29.200 29.200"><circle cx="14.600" cy="14.600" r="14.600" fill="#58a3fb"/><path d="M7.300 19.500C6.600 15.500 7.600 11.800 9.900 9.300 8.300 9 6.700 9.200 5.400 9.900 7.600 6.400 11 4.500 14.800 4.700c4.200.300 6 3.600 8.200 5.600 1.400 1.200 2.700.300 2.900-2.700 1.300 3.600.300 7-2.800 7.500-3 .500-5.200-2-8.600-2.100-3.600 0-6.300 2.800-7.200 6.500z" fill="#fff"/><path d="M3.300 14.200C3.600 12 4.500 10 5.900 8.500" fill="none" stroke="#fff" stroke-width="1.100" stroke-linecap="round"/><circle cx="14.300" cy="19" r="7.500" fill="#fff"/><circle cx="15.300" cy="18.700" r="6.100" fill="#58a3fb"/><circle cx="15.100" cy="19.300" r="3.900" fill="#fff"/><circle cx="15.900" cy="19" r="2.300" fill="#58a3fb"/></svg>
 <div class="abs" style="left:1692.800px;top:12px;line-height:20px;white-space:nowrap;color:#3a4459">IPD版5.0.beta</div>
</div></div>
</body>
</html>
